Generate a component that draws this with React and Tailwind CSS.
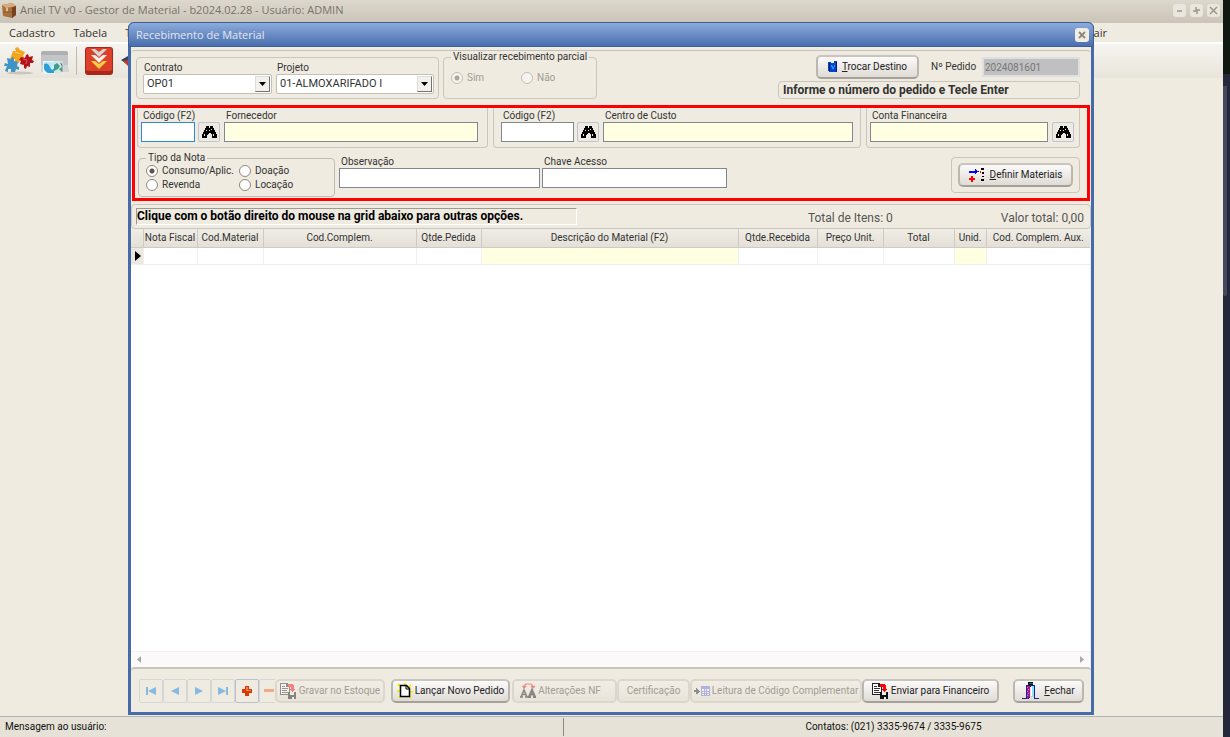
import React from 'react';
import clsx from 'clsx';

const columns = [
  { label: '', width: 'w-3' },
  { label: 'Nota Fiscal', width: 'w-[54px]' },
  { label: 'Cod.Material', width: 'w-[66px]' },
  { label: 'Cod.Complem.', width: 'w-[153px]' },
  { label: 'Qtde.Pedida', width: 'w-[65px]' },
  { label: 'Descrição do Material (F2)', width: 'w-auto', locked: true },
  { label: 'Qtde.Recebida', width: 'w-[79px]' },
  { label: 'Preço Unit.', width: 'w-[66px]' },
  { label: 'Total', width: 'w-[71px]' },
  { label: 'Unid.', width: 'w-8', locked: true },
  { label: 'Cod. Complem. Aux.', width: 'w-[104px]' },
];

/* ---------- icons ---------- */

const BoxIcon = () => (
  <svg width="16" height="16" viewBox="0 0 16 16" aria-hidden="true">
    <path d="M1 3 11 1l4 3v9l-4 3-9-2z" fill="#a8713f" />
    <path d="M1 3 11 1l4 3-10 2z" fill="#d9ac78" />
    <path d="M11 5.500 15 4v9l-4 3z" fill="#75441f" />
    <path d="M5 6v4l2-1V5.500z" fill="#e0bd8e" />
    <path d="M2 10h9" stroke="#8d5a2f" fill="none" />
  </svg>
);

const PuzzleIcon = () => (
  <svg width="30" height="28" viewBox="0 0 30 28" aria-hidden="true">
    <ellipse cx="16" cy="26" rx="13" ry="1.500" fill="#c9c6c0" />
    <path d="M9 4l3 0-1-3 3-1 2 3 5 2-2 4 2 2-2 2-3-1-1 4-4-1 0-3-3 0-1 3-2 0z" fill="#f2a51c" />
    <path d="M3 11l4 1 1-2 2 1 0 3 4 1-1 4 2 1 0 3-3-1-1 3-4 0 0-3-3 0 0 3-3-1 2-5-3 0 1-3 3 1z" fill="#3f94c6" />
    <path d="M17 10l4 1 1-3 2-1 1 3 4-1-1 4 2 1-1 2-3 0 0 4-3-1-1 3-2-1 0-3-4-1 1-3-2-1z" fill="#b3141b" />
    <path d="M19 12l4 1-1 4" stroke="#e0585c" fill="none" />
    <path d="M11 5l6 2" stroke="#ffd063" fill="none" />
  </svg>
);

const FolderIcon = () => (
  <svg width="30" height="28" viewBox="0 0 30 28" aria-hidden="true">
    <path d="M1 6q0-2 2-2h23q2 0 2 2v17q0 2-2 2H3q-2 0-2-2z" fill="#aeb0b2" />
    <path d="M1 8h27v10H1z" fill="#c3c5c7" />
    <path d="M1 18h27l1 7h-6V14H3v11H1z" fill="#d2d4d5" />
    <rect x="3" y="14" width="12" height="13" fill="#e9f8ff" />
    <path d="M4 15h10v4q-5 5-10 1z" fill="#bfe9f8" />
    <path d="M4 17q4-2 6 3t4 1v5H8q-4-2-4-5z" fill="#2f9fd6" />
    <path d="M14 14h8v12h-8z" fill="#cdeae6" />
    <path d="M14 18l3-2 3 3-2 3-4 2zM19 22l3-2v5z" fill="#3f9c86" />
    <path d="M20 15l2 2v3z" fill="#46645d" />
  </svg>
);

const ImportIcon = () => (
  <svg width="28" height="28" viewBox="0 0 28 28" aria-hidden="true">
    <rect width="28" height="28" rx="3" fill="#a92818" />
    <rect x="1" y="1" width="26" height="23" rx="2" fill="#dc4029" />
    <path d="M6 2h4l4 3 4-3h4l-8 8z" fill="#d6d5d1" />
    <path d="M6 8h4l4 3 4-3h4l-8 8z" fill="#f0efec" />
    <path d="M6 14h4l4 3 4-3h4l-8 8z" fill="#f8cf3c" />
  </svg>
);

const Binoculars = () => (
  <svg width="15" height="12" viewBox="0 0 15 12" shapeRendering="crispEdges" aria-hidden="true">
    <path d="M4 0h3v2h1V0h3v2h1v2h1v2h1v2h1v4h-5V8H9V7H7v1H6v1H5v3H0V8h1V6h1V4h1V2h1z" fill="#000" />
    <path d="M2 8h1v2H2zM4 4h1v1H4zM9 3h1v1H9zM11 8h1v2h-1zM7 4h1v1H7z" fill="#e8e8e0" />
  </svg>
);

const BookIcon = () => (
  <svg width="9" height="12" viewBox="0 0 9 12" shapeRendering="crispEdges" aria-hidden="true">
    <path d="M0 1h3v1h3V0h3v11H1v-1H0z" fill="#0645c9" />
    <path d="M1 2h1v8H1zM8 1h1v10H8z" fill="#061b6e" />
    <path d="M3 4h1v1h1v1h1V4h1v2H6v2H4V6H3z" fill="#1b9bff" />
  </svg>
);

const DefineIcon = () => (
  <svg width="16" height="14" viewBox="0 0 16 14" shapeRendering="crispEdges" aria-hidden="true">
    <path d="M0 3h6V1h1v1h1v1h2v1H8v1H7v1H6V5H0z" fill="#00f" />
    <path d="M2 8h2v2h2v2H4v2H2v-2H0v-2h2zM11 3h1v2h-1z" fill="#f00" />
    <path d="M12 0h3v2h-3zM13 4h2v2h-2zM13 8h2v1h-2zM12 11h3v2h-3z" fill="#000" />
  </svg>
);

const SaveDocIcon = () => (
  <svg width="17" height="16" viewBox="0 0 17 16" shapeRendering="crispEdges" aria-hidden="true">
    <path d="M0 0h7l3 3v9H0z" fill="#222" />
    <path d="M1 1h5v3h3v7H1z" fill="#fff" />
    <path d="M2 3h3v1H2zM2 5h6v1H2zM2 7h5v1H2zM2 9h6v1H2z" fill="#333" />
    <path d="M8 1h5v1h1v4h2L12 9 9 6h2V4H8z" fill="#f00" />
    <path d="M8 9h8v7H8z" fill="#111" />
    <path d="M10 9h4v3h-4zM12 14h2v2h-2z" fill="#eee" />
  </svg>
);

const NewDocIcon = () => (
  <svg width="16" height="16" viewBox="0 0 16 16" aria-hidden="true">
    <path d="M1 1l13 14M14 2L2 15M8 0v4M0 8h4M12 9h4" stroke="#f5ee00" strokeWidth="2" />
    <path d="M3.500 2.500h6l3 3v8h-9z" fill="#fff" stroke="#000" strokeWidth="1.500" />
    <path d="M9 3v3h3" fill="none" stroke="#000" />
  </svg>
);

const ChangeIcon = () => (
  <svg width="16" height="15" viewBox="0 0 16 15" aria-hidden="true">
    <path d="M4 5V3l2-2h5l2 2v2M2.500 3L4 5l2-2M11 3l2 2 2-2" fill="none" stroke="#ee1111" strokeWidth="1.200" />
    <path d="M1 14l3-7 3 7M2 11.500h4M0 14h3M5 14h3" fill="none" stroke="#111" strokeWidth="1.500" />
    <path d="M9 14l3-7 3 7M10 11.500h4M8 14h3M13 14h3" fill="none" stroke="#111" strokeWidth="2.200" />
  </svg>
);

const ReadIcon = () => (
  <svg width="16" height="10" viewBox="0 0 16 10" shapeRendering="crispEdges" aria-hidden="true">
    <path d="M0 4h2V2h1v1h1v1h1v1h1v1H5v1H4v1H2V6H0z" fill="#222" />
    <path d="M7 0h9v10H7z" fill="#6872dc" />
    <path d="M8 3h2v2H8zM11 3h1v2h-1zM13 3h2v2h-2zM8 6h2v1H8zM11 6h1v1h-1zM13 6h2v1h-2zM8 8h2v1H8zM11 8h1v1h-1zM13 8h2v1h-2z" fill="#fff" />
  </svg>
);

const DoorIcon = () => (
  <svg width="17" height="18" viewBox="0 0 17 18" shapeRendering="crispEdges" aria-hidden="true">
    <path d="M6 0h5v3H6z" fill="#111" />
    <path d="M7 1h4v1H7z" fill="#087a2c" />
    <path d="M4 3h9v13h4v1h-5V5H8v11l-2 1H0v-1h4z" fill="#1a2396" />
    <path d="M5 4h3v11l-3 2z" fill="#a5178c" />
    <path d="M5 5h1v1H5zM7 7H6v1h1zM5 9h1v1H5zM7 11H6v1h1zM5 13h1v1H5z" fill="#ed6bd8" />
    <path d="M9 4h3v11H9z" fill="#8ce2f5" />
    <path d="M9 5h1v9H9z" fill="#fff" />
  </svg>
);

/* ---------- small controls ---------- */

const Panel = ({ className, children }) => (
  <div className={clsx('rounded border border-[#cbc6bb]', className)}>{children}</div>
);

const PushButton = ({ icon, children, className, disabled, roomy }) => (
  <button
    type="button"
    disabled={disabled}
    className={clsx(
      'flex h-6 shrink-0 items-center justify-center whitespace-nowrap rounded-[5px] border-2 bg-linear-to-b',
      roomy ? 'gap-[5px]' : 'gap-0.5',
      disabled
        ? 'border-[#dcd7cc] from-[#f1ede6] to-[#e9e4da] text-[#a19d94]'
        : 'border-[#bbb7b0] border-t-[#c9c5be] border-b-[#a5a19a] from-[#fcfbfb] to-[#dfdbd5] text-[#222]',
      className,
    )}
  >
    {icon && <span className={clsx('shrink-0', disabled && 'opacity-45')}>{icon}</span>}
    <span>{children}</span>
  </button>
);

const SearchButton = ({ label }) => (
  <button
    type="button"
    aria-label={label}
    className="flex h-5 w-[22px] shrink-0 items-center justify-center rounded-xs border border-[#bfc4d2] bg-[#eeeae2]"
  >
    <Binoculars />
  </button>
);

const Field = ({ id, label, className, inputClass }) => (
  <div className={clsx('flex flex-col', className)}>
    <label htmlFor={id} className="whitespace-nowrap pl-0.5 leading-3">{label}</label>
    <input
      id={id}
      type="text"
      className={clsx('h-5 w-full min-w-0 border px-1 outline-none', inputClass || 'border-[#828790] bg-white')}
    />
  </div>
);

const SelectField = ({ id, label, value, className }) => (
  <div className={clsx('flex flex-col', className)}>
    <label htmlFor={id} className="pl-px leading-3">{label}</label>
    <div className="relative">
      <select id={id} className="h-5 w-full appearance-none rounded-xs border border-[#c4c0b8] bg-white px-[3px] text-[11px] outline-none">
        <option>{value}</option>
      </select>
      <span className="pointer-events-none absolute top-0.5 right-0.5 flex h-4 w-[15px] items-center justify-center border border-[#e0ddd8] border-r-[#77736c] border-b-[#77736c] bg-[#f3f1ed]">
        <svg width="7" height="4" viewBox="0 0 7 4"><path d="M0 0h7L3.500 4z" fill="#000" /></svg>
      </span>
    </div>
  </div>
);

const Radio = ({ name, label, checked, className }) => (
  <label className={clsx('flex items-center gap-1 whitespace-nowrap', className)}>
    <input
      type="radio"
      name={name}
      defaultChecked={checked}
      className="size-3 shrink-0 appearance-none rounded-full border border-[#8d8981] bg-white checked:bg-[radial-gradient(circle,#5f5148_2px,#fff_3px)] disabled:opacity-45"
    />
    {label}
  </label>
);

const NavButton = ({ label, className, children }) => (
  <button
    type="button"
    aria-label={label}
    className={clsx('flex h-6 shrink-0 items-center justify-center rounded-xs border', className || 'w-6 border-[#d5d6d8]')}
  >
    <svg width="12" height="12" viewBox="0 0 12 12">{children}</svg>
  </button>
);

const WindowButton = ({ label, children }) => (
  <button type="button" aria-label={label} className="flex size-[13px] items-center justify-center rounded-[3px] bg-[#eae6de]">
    <svg width="9" height="9" viewBox="0 0 9 9" fill="none" stroke="#9b968c" strokeWidth="1.500">{children}</svg>
  </button>
);

/* ---------- dialog sections ---------- */

const OrderHeader = () => (
  <div className="flex h-[55px] items-start rounded-t border-t border-[#c5c1b8] pt-1 pr-[11px] pl-[5px]">
    <Panel className="mt-0.5 flex h-[42px] w-[303px] shrink-0 items-start gap-1 pt-1 pl-1.5">
      <SelectField id="contrato" label="Contrato" value="OP01" className="w-[129px]" />
      <SelectField id="projeto" label="Projeto" value="01-ALMOXARIFADO I" className="w-[158px]" />
    </Panel>
    <fieldset disabled className="-mt-1 ml-1 h-12 w-[151px] shrink-0 rounded border border-[#cbc6bb] px-[7px] text-[#a19d94]">
      <legend className="whitespace-nowrap px-0.5 leading-3 text-[#333]">Visualizar recebimento parcial</legend>
      <div className="flex pt-2">
        <Radio name="parcial" label="Sim" checked className="w-[70px]" />
        <Radio name="parcial" label="Não" />
      </div>
    </fieldset>
    <div className="ml-auto flex w-[302px] flex-col gap-0.5">
      <div className="flex items-center pl-[38px]">
        <PushButton roomy icon={<BookIcon />} className="w-[103px]"><u>T</u>rocar Destino</PushButton>
        <label htmlFor="pedido" className="ml-3 whitespace-nowrap">Nº Pedido</label>
        <input
          id="pedido"
          type="text"
          readOnly
          defaultValue="2024081601"
          className="ml-auto h-5 w-[98px] border-2 border-[#dedfe2] bg-[#c0c0c0] px-px text-[#777] outline-none"
        />
      </div>
      <Panel className="h-[18px] pl-1 text-[12px] leading-4 font-bold whitespace-nowrap">Informe o número do pedido e Tecle Enter</Panel>
    </div>
  </div>
);

const NoteForm = () => (
  <div className="mr-px ml-px h-24 border-3 border-[#fe0000] pr-[7px] pl-0.5">
    <div className="grid grid-cols-[351fr_368fr_214fr] gap-[5px]">
      <Panel className="flex h-10 items-end rounded-t-none border-t-0 pr-[9px] pb-[5px] pl-[3px]">
        <Field id="fornecedor-cod" label="Código (F2)" className="w-[54px]" inputClass="border-[#2b8ad8] bg-white" />
        <div className="mr-1 ml-[3px]"><SearchButton label="Buscar fornecedor" /></div>
        <Field id="fornecedor" label="Fornecedor" className="flex-1" inputClass="border-[#828790] bg-[#ffffe1]" />
      </Panel>
      <Panel className="flex h-10 items-end rounded-t-none border-t-0 pr-[7px] pb-[5px] pl-[7px]">
        <Field id="custo-cod" label="Código (F2)" className="w-[73px]" />
        <div className="mr-1 ml-[3px]"><SearchButton label="Buscar centro de custo" /></div>
        <Field id="custo" label="Centro de Custo" className="flex-1" inputClass="border-[#828790] bg-[#ffffe1]" />
      </Panel>
      <Panel className="flex h-10 items-end gap-1 rounded-t-none border-t-0 pr-[5px] pb-[5px] pl-[3px]">
        <Field id="conta" label="Conta Financeira" className="flex-1" inputClass="border-[#828790] bg-[#ffffe1]" />
        <SearchButton label="Buscar conta financeira" />
      </Panel>
    </div>
    <div className="mt-1 flex items-start pl-px">
      <fieldset className="h-[45px] w-[197px] shrink-0 rounded border border-[#c2bdb2] px-[7px]">
        <legend className="px-0.5 leading-3">Tipo da Nota</legend>
        <div className="grid grid-cols-[93px_1fr] leading-[14px]">
          <Radio name="tipo" label="Consumo/Aplic." checked />
          <Radio name="tipo" label="Doação" />
          <Radio name="tipo" label="Revenda" />
          <Radio name="tipo" label="Locação" />
        </div>
      </fieldset>
      <Field id="observacao" label="Observação" className="mt-1 ml-1 w-[201px]" />
      <Field id="chave" label="Chave Acesso" className="mt-1 ml-0.5 w-[185px]" />
      <Panel className="mt-[5px] ml-auto px-1.5 py-[5px]">
        <PushButton roomy icon={<DefineIcon />} className="w-[115px]"><u>D</u>efinir Materiais</PushButton>
      </Panel>
    </div>
  </div>
);

const ItemsGrid = () => (
  <div className="mr-px flex flex-1 flex-col bg-white">
    <table className="w-full table-fixed border-collapse">
      <colgroup>
        {columns.map((col) => <col key={col.label} className={col.width} />)}
      </colgroup>
      <thead>
        <tr className="h-[18px] bg-linear-to-b from-[#f0ede6] to-[#e4e0d7]">
          {columns.map((col) => (
            <th key={col.label} className="whitespace-nowrap border-r border-b border-[#cfcbc2] p-0 text-center font-normal last:border-r-0">
              {col.label}
            </th>
          ))}
        </tr>
      </thead>
      <tbody>
        <tr className="h-[17px]">
          {columns.map((col, i) => (
            <td
              key={col.label}
              className={clsx('border-r border-b border-[#f0f0f0] p-0 last:border-r-0', i === 0 && 'bg-[#ece8df]', col.locked && 'bg-[#ffffe1]')}
            >
              {i === 0 && (
                <svg width="6" height="10" viewBox="0 0 6 10" className="ml-1"><path d="M0 0l6 5-6 5z" fill="#000" /></svg>
              )}
            </td>
          ))}
        </tr>
      </tbody>
    </table>
    <div className="mt-auto flex h-4 items-center justify-between border-t border-[#f1eff0] bg-[#fbf9fa] px-1.5">
      <svg width="4" height="7" viewBox="0 0 4 7"><path d="M4 0v7L0 3.500z" fill="#a8a8a8" /></svg>
      <svg width="4" height="7" viewBox="0 0 4 7"><path d="M0 0v7l4-3.500z" fill="#a8a8a8" /></svg>
    </div>
  </div>
);

const ActionBar = () => (
  <div className="flex h-[45px] items-center rounded border-t-2 border-[#c9c4ba] pr-[7px] pl-2">
    <NavButton label="Primeiro"><path d="M1 2h2v8H1zM11 2v8L3 6z" fill="#86b9e3" /></NavButton>
    <NavButton label="Anterior"><path d="M10 2v8L2 6z" fill="#86b9e3" /></NavButton>
    <NavButton label="Próximo"><path d="M2 2v8l8-4z" fill="#86b9e3" /></NavButton>
    <NavButton label="Último"><path d="M1 2v8l8-4zM9 2h2v8H9z" fill="#86b9e3" /></NavButton>
    <NavButton label="Inserir" className="w-6 border-[#bac0d1]">
      <path d="M4 1h4v3h3v4H8v3H4V8H1V4h3z" fill="#d63a0b" />
      <path d="M5 2h2v3h3v1H5z" fill="#f57a3a" />
    </NavButton>
    <NavButton label="Excluir" className="w-4 rounded-r-none border-r-0 border-[#d5d6d8]"><path d="M2 4h10v3H2z" fill="#f0ab85" /></NavButton>
    <PushButton disabled icon={<SaveDocIcon />} className="w-[110px]">Gravar no Estoque</PushButton>
    <PushButton icon={<NewDocIcon />} className="ml-1.5 w-[119px]">Lançar Novo Pedido</PushButton>
    <PushButton disabled icon={<ChangeIcon />} className="ml-0.5 w-[105px] pr-2">Alterações NF</PushButton>
    <PushButton disabled className="w-[73px]">Certificação</PushButton>
    <PushButton disabled icon={<ReadIcon />} className="w-[172px]">Leitura de Código Complementar</PushButton>
    <PushButton icon={<SaveDocIcon />} className="w-[137px]">Enviar para Financeiro</PushButton>
    <PushButton roomy icon={<DoorIcon />} className="ml-auto w-[71px]"><u>F</u>echar</PushButton>
  </div>
);

const ReceiptDialog = () => (
  <section
    aria-label="Recebimento de Material"
    className="absolute top-[22px] right-[129px] bottom-[22px] left-32 flex flex-col rounded-t-md border-x-3 border-b-3 border-[#476ba8] bg-[#efebe0]"
  >
    <div className="-mx-[3px] flex h-[25px] shrink-0 items-center justify-between rounded-t-md border border-[#3f6096] bg-linear-to-b from-[#8dabdc] to-[#4a6fae] pr-1 pl-[7px]">
      <h1 className="font-['Open_Sans'] text-[11px] text-[#e3e8f0]">Recebimento de Material</h1>
      <button type="button" aria-label="Fechar janela" className="flex size-[14px] items-center justify-center rounded-[3px] bg-[#f0ede6]">
        <svg width="8" height="8" viewBox="0 0 8 8"><path d="M1 1l6 6M7 1L1 7" stroke="#8d8778" strokeWidth="1.800" /></svg>
      </button>
    </div>
    <div className="mt-[3px] flex flex-1 flex-col">
      <OrderHeader />
      <NoteForm />
      <div className="mt-[3px] flex h-[25px] items-center justify-between rounded border border-[#cbc6bb] pr-1.5 pl-1">
        <p className="h-[17px] w-[441px] border border-[#9e9a92] border-r-white border-b-white text-[12px] leading-[14px] font-bold whitespace-nowrap text-black">
          Clique com o botão direito do mouse na grid abaixo para outras opções.
        </p>
        <div className="flex gap-[108px] pt-0.5 text-[12px] text-[#555]">
          <span>Total de Itens: 0</span>
          <span>Valor total: 0,00</span>
        </div>
      </div>
      <ItemsGrid />
      <ActionBar />
    </div>
  </section>
);

export const App = () => (
  <div className="flex min-h-screen bg-[#12161c] font-[Roboto,sans-serif] text-[10px] leading-[14px] text-[#333]">
    <div className="relative flex min-w-0 flex-1 flex-col bg-[#efebe0]">
      <header className="flex h-[23px] items-center justify-between bg-linear-to-b from-[#ddd8cd] to-[#cbc4b8] pr-[3px] pb-[3px] pl-px">
        <div className="flex items-center gap-[3px]">
          <BoxIcon />
          <span className="font-['Open_Sans'] text-[11px] text-[#77736c]">
            Aniel TV v0 - Gestor de Material - b2024.02.28 - Usuário: ADMIN
          </span>
        </div>
        <div className="flex gap-1">
          <WindowButton label="Minimizar"><path d="M2 5h5" /></WindowButton>
          <WindowButton label="Restaurar"><path d="M1 5h4v3M4 1v3h4" /></WindowButton>
          <WindowButton label="Fechar"><path d="M1 1l7 7M8 1L1 8" /></WindowButton>
        </div>
      </header>
      <nav className="flex h-[19px] items-center gap-[18px] pr-[116px] pl-[9px] font-['Open_Sans'] text-[11px] text-[#333]">
        <a href="#cadastro">Cadastro</a>
        <a href="#tabela">Tabela</a>
        <a href="#t">T</a>
        <a href="#sair" className="ml-auto">Sair</a>
      </nav>
      <div className="flex h-9 items-center gap-1.5 border-t-2 border-white bg-linear-to-b from-[#f6f4f0] to-[#e9e5dc] pl-1">
        <button type="button" aria-label="Materiais"><PuzzleIcon /></button>
        <button type="button" aria-label="Documentos"><FolderIcon /></button>
        <span className="h-7 w-px bg-[#bdb9b0]" />
        <button type="button" aria-label="Recebimento" className="ml-0.5"><ImportIcon /></button>
        <button type="button" aria-label="Saída" className="ml-0.5">
          <svg width="14" height="14" viewBox="0 0 14 14"><path d="M0 6l7-4v9z" fill="#33465c" /><path d="M2 7l5-1v6z" fill="#c0392b" /></svg>
        </button>
      </div>
      <main className="flex-1" />
      <footer className="flex h-[21px] items-center border-t border-[#b5b1b1] bg-[#e6e2d7] text-[#111]">
        <span className="w-[564px] border-r border-[#8f8b84] pl-[5px] leading-[18px]">Mensagem ao usuário:</span>
        <span className="flex-1 text-center">Contatos: (021) 3335-9674 / 3335-9675</span>
      </footer>
      <ReceiptDialog />
    </div>
    <aside aria-hidden="true" className="flex w-[7px] shrink-0 flex-col bg-[#24283a]">
      <div className="h-[74px] bg-[#10190f]" />
      <div className="mt-3 h-[210px] w-1 rounded-b-xs bg-[#45485d]" />
    </aside>
  </div>
);

export default App;
